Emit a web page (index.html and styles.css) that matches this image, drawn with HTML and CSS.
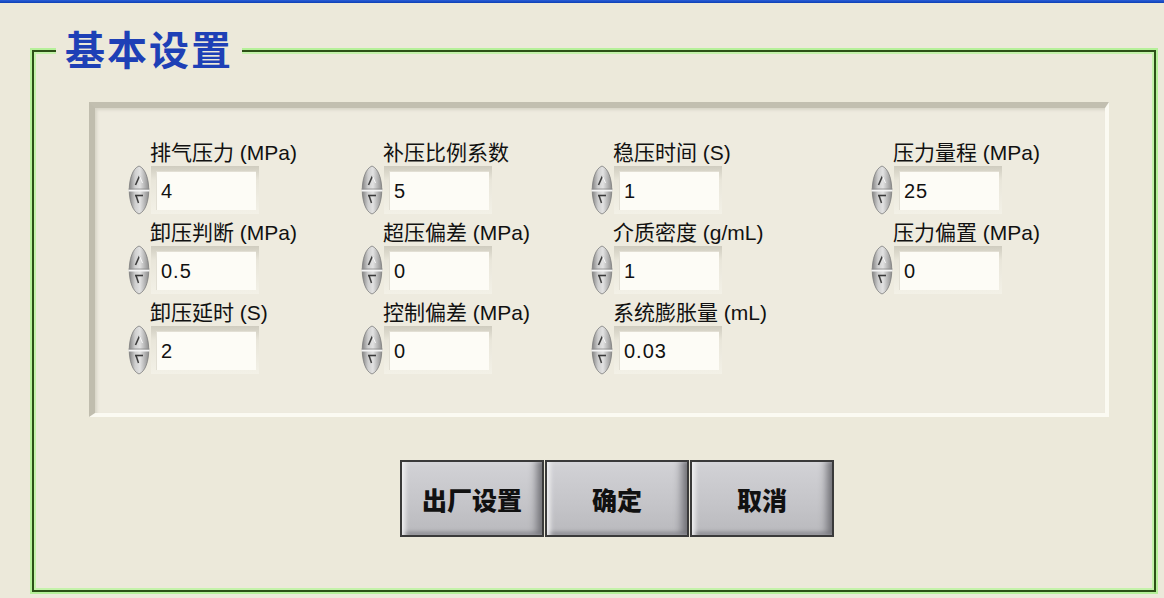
FILE: index.html
```html
<!DOCTYPE html>
<html lang="zh-CN">
<head>
<meta charset="utf-8">
<title>基本设置</title>
<link rel="stylesheet" href="styles.css">
</head>
<body>
<div class="topbar"></div>
<div class="frame">
  <div class="frame-title">基本设置</div>
  <div class="panel">
    <div class="grid">
      <div class="field"><div class="label">排气压力 (MPa)</div><div class="ctrl"><svg class="spin" viewBox="0 0 24 50"><use href="#spinner"/></svg><div class="box"><div class="val">4</div></div></div></div>
      <div class="field"><div class="label">补压比例系数</div><div class="ctrl"><svg class="spin" viewBox="0 0 24 50"><use href="#spinner"/></svg><div class="box"><div class="val">5</div></div></div></div>
      <div class="field"><div class="label">稳压时间 (S)</div><div class="ctrl"><svg class="spin" viewBox="0 0 24 50"><use href="#spinner"/></svg><div class="box"><div class="val">1</div></div></div></div>
      <div class="field"><div class="label">压力量程 (MPa)</div><div class="ctrl"><svg class="spin" viewBox="0 0 24 50"><use href="#spinner"/></svg><div class="box"><div class="val">25</div></div></div></div>

      <div class="field"><div class="label">卸压判断 (MPa)</div><div class="ctrl"><svg class="spin" viewBox="0 0 24 50"><use href="#spinner"/></svg><div class="box"><div class="val">0.5</div></div></div></div>
      <div class="field"><div class="label">超压偏差 (MPa)</div><div class="ctrl"><svg class="spin" viewBox="0 0 24 50"><use href="#spinner"/></svg><div class="box"><div class="val">0</div></div></div></div>
      <div class="field"><div class="label">介质密度 (g/mL)</div><div class="ctrl"><svg class="spin" viewBox="0 0 24 50"><use href="#spinner"/></svg><div class="box"><div class="val">1</div></div></div></div>
      <div class="field"><div class="label">压力偏置 (MPa)</div><div class="ctrl"><svg class="spin" viewBox="0 0 24 50"><use href="#spinner"/></svg><div class="box"><div class="val">0</div></div></div></div>

      <div class="field"><div class="label">卸压延时 (S)</div><div class="ctrl"><svg class="spin" viewBox="0 0 24 50"><use href="#spinner"/></svg><div class="box"><div class="val">2</div></div></div></div>
      <div class="field"><div class="label">控制偏差 (MPa)</div><div class="ctrl"><svg class="spin" viewBox="0 0 24 50"><use href="#spinner"/></svg><div class="box"><div class="val">0</div></div></div></div>
      <div class="field"><div class="label">系统膨胀量 (mL)</div><div class="ctrl"><svg class="spin" viewBox="0 0 24 50"><use href="#spinner"/></svg><div class="box"><div class="val">0.03</div></div></div></div>
    </div>
  </div>
  <div class="buttons">
    <div class="btn">出厂设置</div>
    <div class="btn">确定</div>
    <div class="btn">取消</div>
  </div>
</div>

<svg width="0" height="0" style="position:absolute">
  <defs>
    <linearGradient id="sg" x1="0" y1="0" x2="1" y2="0">
      <stop offset="0" stop-color="#848484"/>
      <stop offset="0.3" stop-color="#cfcfcf"/>
      <stop offset="0.55" stop-color="#e2e2e2"/>
      <stop offset="1" stop-color="#8f8f8f"/>
    </linearGradient>
    <symbol id="spinner" viewBox="0 0 24 50">
      <path d="M12 1 C 25 6, 25 44, 12 49 C -1 44, -1 6, 12 1 Z" fill="url(#sg)" stroke="#7e7e7e" stroke-width="0.8"/>
      <line x1="1.5" y1="25.5" x2="22.5" y2="25.5" stroke="#f4f4f4" stroke-width="2"/>
      <line x1="1.5" y1="24" x2="22.5" y2="24" stroke="#8a8a8a" stroke-width="0.8"/>
      <path d="M8.5 20 L12.5 11" stroke="#3c3c3c" stroke-width="1.6" fill="none"/>
      <path d="M12.5 11 L15.5 18" stroke="#f8f8f8" stroke-width="1" fill="none"/>
      <path d="M8 30.5 L16 30.5" stroke="#3c3c3c" stroke-width="1.6" fill="none"/>
      <path d="M9 30.5 L11.5 38" stroke="#3c3c3c" stroke-width="1.5" fill="none"/>
    </symbol>
  </defs>
</svg>
</body>
</html>
```

FILE: styles.css
```css
html, body {
  margin: 0;
  padding: 0;
}
body {
  width: 1164px;
  height: 598px;
  overflow: hidden;
  background: #ece9da;
  font-family: "Liberation Sans", "Noto Sans CJK SC", sans-serif;
}
.topbar {
  height: 3px;
  background: linear-gradient(#2a5fd8, #0d3fb5);
}
.frame {
  position: relative;
  box-sizing: border-box;
  margin: 47px 0 0 32px;
  width: 1124px;
  height: 542px;
  border: 2px solid #2c5016;
  box-shadow: 0 0 0 2px #b6f09a, inset 0 0 0 2px #c4f2aa;
}
.frame-title {
  position: absolute;
  left: 22px;
  top: -28px;
  padding: 0 9px 0 9px;
  background: #ece9da;
  color: #1e40b6;
  font-family: "Noto Sans CJK SC", sans-serif;
  font-weight: 700;
  font-size: 40px;
  line-height: 48px;
  letter-spacing: 2px;
}
.panel {
  box-sizing: border-box;
  margin: 50px 0 0 55px;
  width: 1020px;
  height: 315px;
  background: #eeebdf;
  border-style: solid;
  border-width: 6px 4px 4px 6px;
  border-color: #c2bfb0 #fbfaf2 #fbfaf2 #c0bdae;
  box-shadow: inset 2px 2px 3px #d8d5c8;
}
.grid {
  display: grid;
  grid-template-columns: 233px 230px 280px auto;
  grid-auto-rows: 80px;
  padding: 32px 0 0 32px;
}
.label {
  margin-left: 23px;
  height: 25px;
  font-size: 21px;
  line-height: 25px;
  color: #111;
  white-space: nowrap;
}
.ctrl {
  display: flex;
  align-items: center;
  height: 50px;
}
.spin {
  width: 24px;
  height: 50px;
  flex: none;
}
.box {
  box-sizing: border-box;
  width: 108px;
  height: 48px;
  padding: 5px 3px 4px 5px;
  background: linear-gradient(#cfccbf, #e9e6da 30%, #f3f1e7);
}
.val {
  height: 39px;
  background: #fdfcf6;
  box-shadow: inset 1px 1px 0 #e2dfd4;
  font-size: 20px;
  letter-spacing: 1px;
  line-height: 40px;
  padding-left: 5px;
  color: #111;
}
.buttons {
  display: flex;
  gap: 1px;
  margin: 43px 0 0 366px;
}
.btn {
  box-sizing: border-box;
  width: 144px;
  height: 77px;
  border: 2px solid #3a3a3a;
  background: linear-gradient(#d2d2d6, #c4c4c8 60%, #b9b9bd);
  box-shadow:
    inset 5px 0 5px -2px #f2f2f4,
    inset -9px 0 8px -4px #6e6e74,
    inset 0 4px 4px -2px #e6e6e8,
    inset 0 -5px 5px -3px #7c7c82;
  display: flex;
  align-items: center;
  justify-content: center;
  font-family: "Noto Sans CJK SC", sans-serif;
  font-weight: 900;
  font-size: 25px;
  color: #111;
}
```
